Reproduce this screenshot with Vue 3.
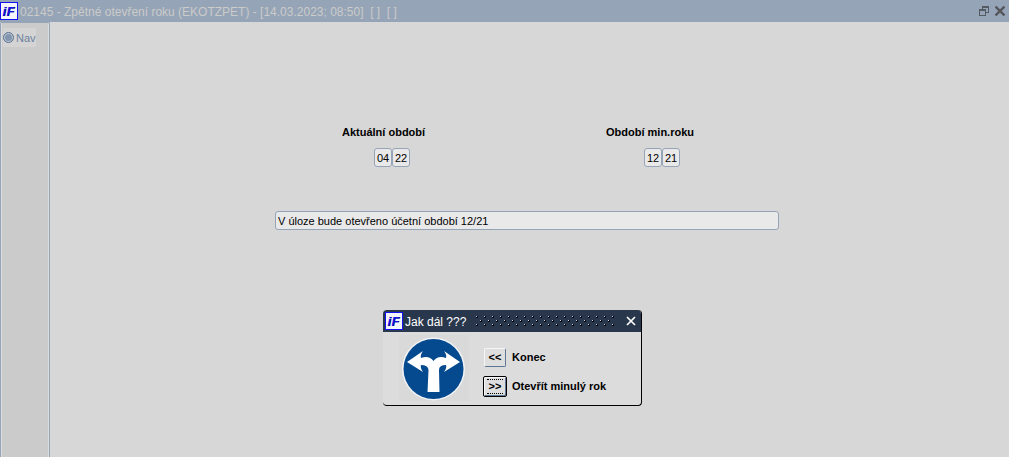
<script setup>
import { ref } from 'vue'

const current = ref(['04', '22'])
const previous = ref(['12', '21'])
const message = ref('V úloze bude otevřeno účetní období 12/21')
const title = '02145 - Zpětné otevření roku (EKOTZPET) - [14.03.2023; 08:50]  [ ]  [ ]'
</script>

<template>
  <div class="window">
    <header class="titlebar">
      <svg class="logo" viewBox="0 0 18 18" role="img" aria-label="iF">
        <rect x=".5" y=".5" width="17" height="17" fill="#f4f5fb" stroke="#1212f2" />
        <text x="3" y="14" class="mark shade">i</text>
        <text x="7" y="14" class="mark shade">F</text>
        <text x="2.5" y="14" class="mark">i</text>
        <text x="6.5" y="14" class="mark">F</text>
      </svg>
      <h1>{{ title }}</h1>
      <button class="tool" aria-label="Obnovit">
        <svg viewBox="0 0 10 10" shape-rendering="crispEdges" fill="#555b63">
          <path fill-rule="evenodd" d="M3 0h7v7H7V6h2V2H4v1H3zM0 3h7v7H0zM1 5v4h5V5z" />
        </svg>
      </button>
      <button class="tool close" aria-label="Zavřít">
        <svg viewBox="0 0 10 10"><path d="M.5 .5l9 9M9.500 .5l-9 9" stroke="#54565a" stroke-width="2.300" /></svg>
      </button>
    </header>

    <div class="body">
      <nav class="side">
        <label class="nav"><input type="radio" name="nav" />Nav</label>
      </nav>
      <main>
        <form class="form" @submit.prevent>
          <div class="periods">
            <div class="period" role="group" aria-labelledby="cur">
              <h2 id="cur">Aktuální období</h2>
              <div class="pair">
                <input v-for="(v, i) in current" :key="i" v-model="current[i]" :aria-label="i ? 'Rok' : 'Měsíc'" />
              </div>
            </div>
            <div class="period" role="group" aria-labelledby="prev">
              <h2 id="prev">Období min.roku</h2>
              <div class="pair wide">
                <input v-for="(v, i) in previous" :key="i" v-model="previous[i]" :aria-label="i ? 'Rok' : 'Měsíc'" />
              </div>
            </div>
          </div>
          <input class="message" v-model="message" aria-label="Zpráva" readonly />
        </form>
      </main>
    </div>

    <section class="dialog" role="dialog" aria-labelledby="ask">
      <header class="bar">
        <svg class="logo" viewBox="0 0 18 18" role="img" aria-label="iF">
          <rect x=".5" y=".5" width="17" height="17" fill="#f4f5fb" stroke="#1212f2" />
          <text x="3" y="14" class="mark shade">i</text>
          <text x="7" y="14" class="mark shade">F</text>
          <text x="2.5" y="14" class="mark">i</text>
          <text x="6.5" y="14" class="mark">F</text>
        </svg>
        <h2 id="ask">Jak dál ???</h2>
        <svg class="grip" shape-rendering="crispEdges" aria-hidden="true">
          <defs>
            <pattern id="dots" width="8" height="8" patternUnits="userSpaceOnUse">
              <path d="M1 1h2v2H1zM5 5h2v2H5z" fill="#05070c" />
              <path d="M1 1h1v1H1zM5 5h1v1H5z" fill="#c9d5e4" />
            </pattern>
          </defs>
          <rect width="100%" height="100%" fill="url(#dots)" />
        </svg>
        <button class="x" aria-label="Zavřít">
          <svg viewBox="0 0 10 10"><path d="M1 1l8 8M9 1L1 9" stroke="#fff" stroke-width="1.7" /></svg>
        </button>
      </header>
      <div class="content">
        <svg class="sign" viewBox="0 0 70 66" aria-hidden="true">
          <rect width="70" height="66" fill="#d9d9d9" />
          <circle cx="34.5" cy="34" r="31.5" fill="#f1f3f6" />
          <circle cx="34.5" cy="34" r="30" fill="#05498f" />
          <path fill="#fff" d="M8 27L24 16Q21 20 22 23Q30 20 34.500 26Q39 20 47 23Q48 20 45 16L61 27L45 37Q48 33 47 30Q40 30 40 35L40.500 57H28.500L29.500 35Q29 30 22 30Q21 33 24 37Z" />
        </svg>
        <div class="choices">
          <div class="choice">
            <button id="end">&lt;&lt;</button><label for="end">Konec</label>
          </div>
          <div class="choice">
            <button id="open" class="default"><span>&gt;&gt;</span></button><label for="open">Otevřít minulý rok</label>
          </div>
        </div>
      </div>
    </section>
  </div>
</template>

<style>
body {
  background: #d7d7d7;
}
</style>

<style scoped>
.window {
  position: relative;
  display: flex;
  flex-direction: column;
  min-height: 100vh;
  font: 11px/14px "Liberation Sans", Arial, sans-serif;
  color: #000;
  background: #d7d7d7;
}
* {
  box-sizing: border-box;
}
h1,
h2 {
  margin: 0;
}
button,
input {
  font: inherit;
  color: inherit;
  margin: 0;
  padding: 0;
}
svg {
  display: block;
}
.titlebar {
  display: flex;
  align-items: center;
  height: 22px;
  padding-right: 4px;
  background: #96a4b7;
}
.logo {
  width: 18px;
  height: 18px;
  flex: none;
}
.mark {
  font: italic bold 13px "Liberation Sans", Arial, sans-serif;
  fill: #1212e8;
}
.shade {
  fill: #10103c;
}
.titlebar h1 {
  flex: 1;
  margin-left: 2px;
  padding-top: 2px;
  font-size: 12px;
  font-weight: normal;
  line-height: 16px;
  white-space: pre;
  color: #cbcbc9;
}
.tool,
.x {
  border: 0;
  background: none;
}
.tool svg,
.x svg {
  width: 10px;
  height: 10px;
}
.close {
  margin-left: 6px;
}
.body {
  display: flex;
  flex: 1;
}
.side {
  width: 50px;
  padding: 5px 2px;
  border: solid #96a4b7;
  border-width: 1px 1px 0 1px;
  border-radius: 2px 2px 0 0;
  background: #cbcbcb;
  box-shadow: inset 1px 0 #dcdcdc, inset -1px 0 #dcdcdc;
}
.nav {
  display: flex;
  align-items: center;
  gap: 2px;
  width: 33px;
  height: 19px;
  background: #d4d4d4;
  color: #6c819e;
}
.nav input {
  appearance: none;
  flex: none;
  width: 11px;
  height: 11px;
  border: 1px solid #5f7796;
  border-radius: 50%;
  background: #8295ae;
  box-shadow: inset 0 0 0 1px #c4cbd4;
}
main {
  flex: 1;
  padding: 103px 5px 0 0;
}
.form {
  max-width: 504px;
  margin: 0 auto;
}
.periods {
  display: flex;
  padding-left: 67px;
}
.period {
  flex: none;
  width: 264px;
}
.period:last-child {
  flex: 1;
}
.period h2 {
  font-size: 11px;
  line-height: 14px;
}
.pair {
  display: flex;
  margin: 9px 0 0 32px;
}
.pair.wide {
  margin-left: 38px;
}
.pair input,
.message {
  height: 19px;
  border: 1px solid #96a4b7;
  border-radius: 3px;
  background: #e9e9e9;
  outline: 0;
}
.pair input {
  width: 18px;
  text-align: center;
}
.message {
  display: block;
  width: 100%;
  margin-top: 44px;
  padding: 0 2px;
}
.dialog {
  position: absolute;
  left: 383px;
  top: 310px;
  width: 259px;
  overflow: hidden;
  border: solid #000;
  border-width: 0 1px 1px 0;
  border-radius: 4px;
  background: #dcdcdc;
}
.bar {
  display: flex;
  align-items: center;
  height: 22px;
  padding: 0 5px 0 2px;
  background: #29374d;
}
.bar h2 {
  margin-left: 2px;
  font-size: 12px;
  font-weight: normal;
  line-height: 16px;
  padding-top: 2px;
  color: #fff;
}
.grip {
  flex: 1;
  height: 12px;
  margin: 0 10px 0 9px;
}
.content {
  display: flex;
  padding: 3px 0 4px 16px;
}
.sign {
  width: 70px;
  height: 66px;
}
.choices {
  display: flex;
  flex-direction: column;
  gap: 7px;
  padding: 11px 0 0 14px;
}
.choice {
  display: flex;
  align-items: center;
  gap: 5px;
  height: 22px;
  font-weight: bold;
}
.choice button {
  width: 22px;
  height: 19px;
  margin: 0 1px;
  border: 1px solid #f6f6f6;
  border-right-color: #5f7796;
  border-bottom-color: #5f7796;
  border-radius: 2px;
  background: #dedede;
  font-size: 11px;
  line-height: 14px;
}
.choice .default {
  width: 24px;
  height: 21px;
  margin: 0;
  padding: 1px 3px;
  border: 1px solid #000;
  box-shadow: inset 1px 1px #f6f6f6, inset -1px -1px #5f7796;
}
.default span {
  display: block;
  border: dotted #000;
  border-width: 1px 0;
  line-height: 13px;
}
</style>
